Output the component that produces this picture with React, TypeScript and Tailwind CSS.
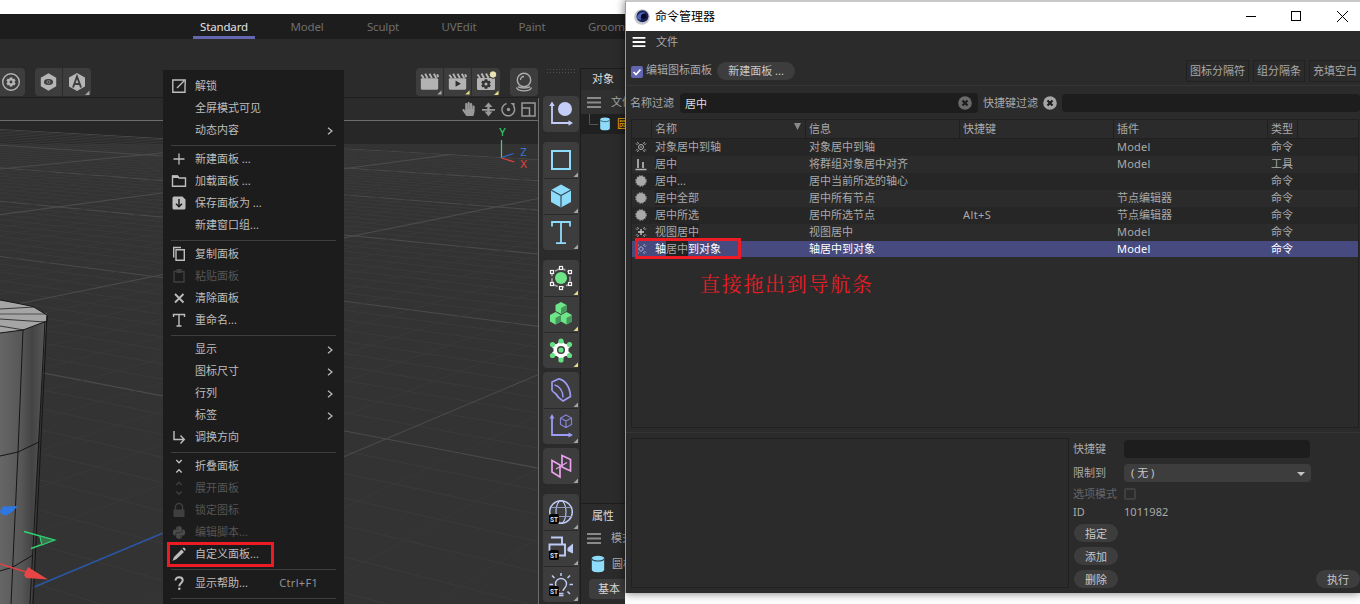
import type { ReactNode } from "react";
import { FaHandPaper, FaPython } from "react-icons/fa";

/* ---------- shared icon helpers ---------- */

function Tool({ children, first = false, corner = "gray" }: { children: ReactNode; first?: boolean; corner?: "gray" | "yellow" | "none" }) {
  return (
    <svg className="block h-9 w-9" viewBox="0 0 36 36" fill="none">
      {!first && <path d="M1 .5H35" stroke="#2a2a2a" />}
      {children}
      {corner !== "none" && <path d="M35 30.500V35H30.500Z" fill={corner === "yellow" ? "#e3dc82" : "#a5a5a5"} />}
    </svg>
  );
}

function StBadge() {
  return (
    <>
      <rect x="6" y="20" width="10" height="10" rx="2" fill="#050505" />
      <text x="11" y="27.700" fill="#dfe3f5" fontSize="6.500" fontWeight="700" textAnchor="middle" fontFamily="Roboto, sans-serif">ST</text>
    </>
  );
}

function Clapper({ children, yellow = false }: { children?: ReactNode; yellow?: boolean }) {
  return (
    <svg className="block h-7 w-7" viewBox="0 0 28 28" fill="none">
      <rect x="5" y="10" width="18" height="12" rx="1.200" fill="#b3b3b3" />
      <path d="M5.500 6.500L8 10M9.500 5.500L12 10M14 5.500L16.500 10M18.500 5.500L21 10M22 6L23 9" stroke="#b3b3b3" strokeWidth="2" />
      {children}
      <path d="M26.500 22.500V27H22Z" fill={yellow ? "#e3dc82" : "#a5a5a5"} />
    </svg>
  );
}

function Gear({ cx, cy, r, color, hole, body = 0.72 }: { cx: number; cy: number; r: number; color: string; hole: string; body?: number }) {
  return (
    <g transform={`translate(${cx} ${cy})`}>
      {[0, 60, 120].map((a) => (
        <path key={a} d={`M0 ${-r}V${r}`} stroke={color} strokeWidth={r * 0.55} transform={`rotate(${a})`} />
      ))}
      <circle r={r * body} fill={color} />
      <circle r={r * 0.32} fill={hole} />
    </g>
  );
}

function Cylinder({ className }: { className: string }) {
  return (
    <svg className={className} viewBox="0 0 12 16">
      <path d="M.5 3V13C.5 16 11.500 16 11.500 13V3Z" fill="#8edcfb" />
      <ellipse cx="6" cy="3" rx="5.500" ry="2.400" fill="#8edcfb" />
      <path d="M.5 3.300C1.500 6 10.500 6 11.500 3.300" fill="none" stroke="#2b4c5a" strokeWidth=".9" />
    </svg>
  );
}

/* ---------- perspective viewport ---------- */

const ax = -1735;
const ay = 31;
const bx = 1340;
const by = 36;

function crossAt(v: [number, number], y: number, x: number) {
  return v[1] + ((y - v[1]) * (x - v[0])) / (345 - v[0]);
}

const gridA = Array.from({ length: 60 }, (_, i) => ({ y: ay + 1 / (0.0085 - i * 0.00012), major: i % 10 === 0 })).filter((g) => g.y > 0 && g.y < 720);
const gridB = Array.from({ length: 40 }, (_, i) => ({ y: by + 1 / (0.01012 - i * 0.000258), major: i % 10 === 0 })).filter((g) => g.y > 0 && g.y < 1000);

function Viewport() {
  return (
    <svg className="block h-[483px] w-[538px]" viewBox="0 121 538 483">
      <defs>
        <linearGradient id="body" x1="0" x2="47" y1="0" y2="0" gradientUnits="userSpaceOnUse">
          <stop offset="0" stopColor="#666" />
          <stop offset=".45" stopColor="#575757" />
          <stop offset=".68" stopColor="#444" />
          <stop offset=".85" stopColor="#505050" />
          <stop offset="1" stopColor="#5a5a5a" />
        </linearGradient>
        <clipPath id="floor">
          <path d="M0 129L538 159V604H0Z" />
        </clipPath>
      </defs>
      <rect y="121" width="538" height="483" fill="#333" />
      <rect y="121" width="538" height="23" fill="#272727" />
      <g clipPath="url(#floor)" fill="none">
        {gridA.map((g, i) => (
          <path key={i} d={`M0 ${crossAt([ax, ay], g.y, 0)}L538 ${crossAt([ax, ay], g.y, 538)}`} stroke={g.major ? "#4b4b4b" : "#3b3b3b"} strokeWidth={g.major ? 1.1 : 0.9} />
        ))}
        {gridB.map((g, i) => (
          <path key={i} d={`M0 ${crossAt([bx, by], g.y, 0)}L538 ${crossAt([bx, by], g.y, 538)}`} stroke={g.major ? "#4b4b4b" : "#393939"} strokeWidth={g.major ? 1.1 : 0.9} />
        ))}
      </g>
      <path d="M34 587L162 533.500" stroke="#2a55a3" strokeWidth="1.400" />
      <path d="M0 333L23 330L46 321L38 450L32 604H0Z" fill="url(#body)" />
      <path d="M0 300L16 303L33 306.500L47 315V321L23 330L0 333Z" fill="#a5a5a5" />
      <path d="M0 309L34 307M0 319L45 322M0 326L24 330" stroke="#2b2b2b" strokeWidth=".9" fill="none" />
      <path d="M0 314H47" stroke="#6d6d6d" strokeWidth="1.600" />
      <path d="M0 300L16 303L33 306.500L47 315V321L23 330L0 333M23 330L18 452L11 604M45 321L38 455L30 604M47 316L41 440L33 604M0 456L18 452L39 442M0 571L13 567L33 555" stroke="#161616" strokeWidth="1" fill="none" />
      <path d="M0 511L3 506.500L18 506L12 512L6 515.500L1 514Z" fill="#2f78e4" />
      <path d="M24 531.500L54.500 540L31 548.500M40 536L42 545" stroke="#2fd46f" strokeWidth="1.400" fill="none" />
      <path d="M40 536L54 540L42 545Z" fill="#38754f" stroke="#2fd46f" strokeWidth=".8" />
      <path d="M0 564L26 572" stroke="#e24040" strokeWidth="1.400" />
      <path d="M24 575L28 567L48 579.500L26 578Z" fill="#e64545" />
      <path d="M501.500 140V158" stroke="#35d676" strokeWidth="1.200" />
      <path d="M501.500 157.500L513.500 153.500" stroke="#3569c8" strokeWidth="1.200" />
      <path d="M501.500 158L514.500 162" stroke="#e24040" strokeWidth="1.200" />
      <g fontFamily="Noto Sans, sans-serif" fontSize="11.500" textAnchor="middle">
        <text x="502.500" y="136" fill="#2fd46f">Y</text>
        <text x="523.500" y="155.500" fill="#3274dc">Z</text>
        <text x="523.500" y="168" fill="#e24444">X</text>
      </g>
    </svg>
  );
}

/* ---------- vertical tool palette ---------- */

function ToolGroup({ children }: { children: ReactNode }) {
  return <div className="w-9 overflow-hidden rounded-[4px] bg-[#3d3d3d]">{children}</div>;
}

function Palette() {
  return (
    <div className="flex w-[41px] shrink-0 flex-col items-start pl-1">
      <svg className="ml-[3px] mt-[29px] block h-7 w-[30px] shrink-0" viewBox="0 0 30 28">
        <path d="M1 1.500H30M1 4.500H30" stroke="#4f4f4f" strokeDasharray="1 2" />
      </svg>
      <ToolGroup>
        <Tool first corner="none">
          <path d="M9 9V27H27" stroke="#c3cdf7" strokeWidth="1.800" />
          <path d="M9 5.500L11.800 10H6.200ZM30 27L25.500 29.800V24.200Z" fill="#c3cdf7" />
          <circle cx="22" cy="13" r="7" fill="#c3cdf7" />
        </Tool>
      </ToolGroup>
      <div className="mt-2.5">
        <ToolGroup>
          <Tool first><rect x="9" y="9" width="18" height="18" stroke="#8edcfb" strokeWidth="2" /></Tool>
          <Tool>
            <path d="M18 6.500L28 12V24L18 29.500L8 24V12Z" fill="#8edcfb" />
            <path d="M8 12L18 17.500L28 12M18 17.500V29.500" stroke="#32505c" strokeWidth="1.200" />
          </Tool>
          <Tool><path d="M9 12.500V8H27V12.500M18 8V29M13 29.200H23" stroke="#8edcfb" strokeWidth="1.800" /></Tool>
        </ToolGroup>
      </div>
      <div className="mt-2.5">
        <ToolGroup>
          <Tool first corner="yellow">
            <path d="M18 8L27 12.500V24L18 28L9 24V12.500Z" stroke="#a8a8a8" strokeWidth="1.500" strokeDasharray="5 2" />
            <circle cx="18" cy="18" r="6.700" fill="#3d3d3d" />
            <circle cx="18" cy="18" r="6" fill="#6ee587" />
            {[[18, 8], [27, 12], [27, 24], [18, 28], [9, 24], [9, 12]].map(([x, y]) => (
              <rect key={`${x}-${y}`} x={x - 1.5} y={y - 1.5} width="3" height="3" fill="#3d3d3d" stroke="#f4f4f4" strokeWidth="1.200" />
            ))}
          </Tool>
          <Tool corner="yellow">
            <path d="M18 6L23.500 9V15L18 18L12.500 15V9Z" fill="#6ee587" />
            <path d="M12.500 16L18 19V25.500L12.500 28.500L7 25.500V19Z" fill="#6ee587" />
            <path d="M23.500 16L29 19V25.500L23.500 28.500L18 25.500V19Z" fill="#6ee587" />
            <path d="M18 12L23.500 9V15L18 18ZM12.500 22L18 19V25.500L12.500 28.500ZM23.500 22L29 19V25.500L23.500 28.500Z" fill="#43975a" />
          </Tool>
          <Tool corner="yellow">
            <Gear cx={18} cy={18} r={8.8} color="#fff" hole="#3d3d3d" body={0.86} />
            <circle cx="18" cy="18" r="4" fill="#3d3d3d" />
            {[[18, 18], [18, 9], [26.5, 12.5], [26.5, 23.5], [18, 28], [9.5, 23.5], [9.5, 12.5]].map(([x, y]) => (
              <circle key={`${x}-${y}`} cx={x} cy={y} r="2.600" fill="#66e085" />
            ))}
          </Tool>
        </ToolGroup>
      </div>
      <div className="mt-1">
        <ToolGroup>
          <Tool first>
            <path d="M9 10L16 6.800C22 8 27 15 27.500 24.500L20 29C15 26 14 24 13 22C10 20 8.500 18 9 17Z" stroke="#9c9bf5" strokeWidth="1.700" strokeLinejoin="round" />
            <path d="M11.500 13C16.500 14 20 19 20 25.500" stroke="#9c9bf5" strokeWidth="1.400" />
          </Tool>
          <Tool>
            <path d="M9 9V27H27" stroke="#9c9bf5" strokeWidth="1.800" />
            <path d="M9 6L11.500 10.500H6.500ZM30 27L25.500 29.500V24.500Z" fill="#9c9bf5" />
            <path d="M23 7L28.500 10V16.500L23 19.500L17.500 16.500V10ZM17.500 10L23 13L28.500 10M23 13V19.500" stroke="#8482d0" strokeWidth="1.200" />
          </Tool>
        </ToolGroup>
      </div>
      <div className="mt-1">
        <ToolGroup>
          <Tool first>
            <path d="M9 12.500L17 17V29L9 24ZM19 7.500L27.500 11.500V23L19 19Z" stroke="#e9a1ea" strokeWidth="1.700" />
            <path d="M13 21L24 14.500" stroke="#e9a1ea" strokeWidth="1.200" />
          </Tool>
        </ToolGroup>
      </div>
      <div className="mt-2.5">
        <ToolGroup>
          <Tool first>
            <circle cx="18" cy="18" r="11.300" stroke="#bfcbf5" strokeWidth="1.500" />
            <ellipse cx="18" cy="18" rx="5" ry="11.300" stroke="#bfcbf5" strokeWidth="1.100" />
            <path d="M8 13.500H28M7 22.500H29" stroke="#8f9ac4" />
            <StBadge />
          </Tool>
          <Tool>
            <path d="M8 7.500H19V13.500M6.500 21V14.500H22V25.500H16" stroke="#bfcbf5" strokeWidth="1.900" />
            <path d="M24.500 18L30 13.500V23.500L24.500 21Z" fill="#bfcbf5" />
            <StBadge />
          </Tool>
          <Tool>
            <path d="M16 25C15.500 22 12.500 21.500 12.500 18A5.500 5.500 0 0 1 23.500 18C23.500 21.500 20.500 22 20 25M16 27.500H20.500M16 29.500H20.500" stroke="#bfcbf5" strokeWidth="1.400" />
            <path d="M18 7V10M9 9.500L11.500 12M27 9.500L24.500 12M6.500 18.500H10M26.500 18.500H30M27 28L24.500 25.500" stroke="#bfcbf5" strokeWidth="1.500" />
            <StBadge />
          </Tool>
        </ToolGroup>
      </div>
    </div>
  );
}

/* ---------- objects and attributes panels ---------- */

function Burger({ className }: { className: string }) {
  return (
    <svg className={className} viewBox="0 0 14 11">
      <path d="M0 1H14M0 5.500H14M0 10H14" stroke="currentColor" strokeWidth="2" />
    </svg>
  );
}

function SidePanels() {
  return (
    <div className="mt-[29px] flex w-[45px] shrink-0 flex-col overflow-hidden whitespace-nowrap border-l border-t border-[#1d1d1d] text-[11px] leading-[22px]">
      <div className="flex h-[434px] shrink-0 flex-col">
        <div className="h-[21px] pl-[11px] leading-[20px] text-[#dcdcdc]">对象</div>
        <div className="flex h-6 items-center gap-2.5 bg-[#303030] pl-1.5 text-[#a9a9a9]">
          <Burger className="h-[11px] w-3.5 shrink-0 text-[#8a8a8a]" />
          <span>文件</span>
        </div>
        <div className="flex h-5 items-center bg-[#202020]">
          <svg className="h-5 w-[18px] shrink-0" viewBox="0 0 18 20"><path d="M8.500 0V10.500H17" fill="none" stroke="#555" /></svg>
          <Cylinder className="h-[14px] w-3 shrink-0" />
          <span className="ml-1.5 text-[#ffb000]">圆柱体</span>
        </div>
      </div>
      <div className="flex flex-1 flex-col border-t border-[#1d1d1d] pt-px">
        <div className="pl-[11px] text-[#dcdcdc]">属性</div>
        <div className="flex h-[22px] items-center gap-2.5 pl-1.5 text-[#a9a9a9]">
          <Burger className="h-[11px] w-3.5 shrink-0 text-[#8a8a8a]" />
          <span>模式</span>
        </div>
        <div className="flex h-[30px] items-center gap-[7px] pl-2.5 text-[#b0b0b0]">
          <Cylinder className="h-[18px] w-[14px] shrink-0" />
          <span>圆柱</span>
        </div>
        <div className="flex pl-2">
          <div className="h-5 w-12 shrink-0 rounded-[4px] bg-[#3d3d3d] pl-[9px] leading-[19px] text-[#d6d6d6]">基本</div>
        </div>
      </div>
    </div>
  );
}

/* ---------- main application ---------- */

function TabBar() {
  return (
    <div className="flex h-[25px] bg-[#1d1d1d] text-[11.5px] leading-[26px] tracking-[-0.15px] text-[#6e6e6e]">
      <div className="ml-[193px] w-[62px] border-b-[3px] border-[#6467b0] text-center text-[#e2e2e2]">Standard</div>
      <div className="ml-5 w-16 text-center">Model</div>
      <div className="ml-3 w-16 text-center">Sculpt</div>
      <div className="ml-3 w-16 text-center">UVEdit</div>
      <div className="ml-[9px] w-16 text-center">Paint</div>
      <div className="ml-6">Groom</div>
    </div>
  );
}

function IconBar() {
  return (
    <div className="flex h-[59px] items-start border-b border-[#202020] pt-[29px]">
      <div className="h-7 w-[25px] rounded-r-[4px] bg-[#3d3d3d]">
        <svg className="block h-7 w-[25px]" viewBox="0 0 25 28" fill="none">
          <circle cx="11" cy="14" r="8.300" stroke="#b5b5b5" strokeWidth="1.400" />
          <Gear cx={11} cy={14} r={4.6} color="#b5b5b5" hole="#3d3d3d" body={0.8} />
        </svg>
      </div>
      <div className="ml-2.5 flex h-7 w-14 divide-x divide-[#2c2c2c] rounded-[4px] bg-[#3d3d3d]">
        <svg className="block h-7 w-7" viewBox="0 0 28 28" fill="none">
          <path d="M14 5L22 9.500V18.500L14 23L6 18.500V9.500Z" fill="#b5b5b5" />
          <ellipse cx="14" cy="14" rx="4.700" ry="3.100" fill="#3d3d3d" />
          <circle cx="14" cy="14" r="1.500" stroke="#999" strokeWidth=".8" />
        </svg>
        <svg className="block h-7 w-7" viewBox="0 0 28 28" fill="none">
          <path d="M14 5L22 9.500V18.500L14 23L6 18.500V9.500Z" fill="#b5b5b5" />
          <path d="M10 19.500L14 8.500L18 19.500M11.500 16H16.500" stroke="#3d3d3d" strokeWidth="1.900" />
          <path d="M26.500 22.500V27H22Z" fill="#a5a5a5" />
        </svg>
      </div>
      <div className="ml-[325px] flex h-7 w-[84px] divide-x divide-[#2c2c2c] rounded-[4px] bg-[#3d3d3d]">
        <Clapper />
        <Clapper yellow><path d="M12 12.500V19L17.500 15.700Z" fill="#2e2e2e" /></Clapper>
        <Clapper yellow>
          <Gear cx={14} cy={16} r={4.8} color="#333" hole="#b3b3b3" body={0.78} />
          <circle cx="21" cy="6.500" r="3.800" fill="#e8e3b4" stroke="#333" />
        </Clapper>
      </div>
      <svg className="ml-2.5 block h-7 w-7 rounded-[4px] bg-[#3d3d3d]" viewBox="0 0 28 28" fill="none">
        <circle cx="14" cy="12" r="6.700" stroke="#adadad" strokeWidth="1.400" />
        <path d="M10.500 12A3.500 3.500 0 0 1 14 8.500M8 18.500C10 20.500 18 20.500 20 18.500M6.500 19.500C8 24 20 24 21.500 19.500" stroke="#adadad" strokeWidth="1.300" />
      </svg>
    </div>
  );
}

function ViewBar() {
  return (
    <div className="flex h-[23px] items-center justify-end gap-[5px] border-b border-[#6c6c6c] bg-[#2b2b2b] pr-[2px] text-[#999]">
      <FaHandPaper className="h-[14px] w-[15px]" />
      <svg className="h-[15px] w-[15px]" viewBox="0 0 15 15"><path d="M7.500 0.500L11.500 5H8.700V7H14V8.800H8.700V9.500H11.500L7.500 14.500L3.500 9.500H6.300V8.800H1V7H6.300V5H3.500Z" fill="#999" /></svg>
      <svg className="h-[15px] w-[15px]" viewBox="0 0 15 15" fill="none"><path d="M5.500 1.500A6.300 6.300 0 1 0 12.500 4" stroke="#999" strokeWidth="1.500" /><circle cx="7.500" cy="7.500" r="1.700" fill="#999" /><path d="M9.500 1H13.500V5Z" fill="#999" /></svg>
      <svg className="h-[15px] w-[15px]" viewBox="0 0 15 15" fill="none"><path d="M1 1H14V14H1ZM1 6H8.500V14" stroke="#999" strokeWidth="1.500" /></svg>
    </div>
  );
}

/* ---------- context menu ---------- */

type Item = { label: string; icon?: ReactNode; arrow?: boolean; off?: boolean; keys?: string };

const stroke = { fill: "none", stroke: "currentColor", strokeWidth: 1.4 };

const sections: Item[][] = [
  [
    { label: "解锁", icon: <path d="M9 2H1.800V14.200H14V7M6 10L13 3M9 2H14.200V7" {...stroke} /> },
    { label: "全屏模式可见" },
    { label: "动态内容", arrow: true },
  ],
  [
    { label: "新建面板 ...", icon: <path d="M8 2.500V13.500M2.500 8H13.500" {...stroke} strokeWidth={1.300} /> },
    { label: "加载面板 ...", icon: <><path d="M1.500 4V13.200H14.500V5H8L6.500 3H1.500V5" {...stroke} /><path d="M1 2.500H7L8 5H1Z" fill="currentColor" /></> },
    { label: "保存面板为 ...", icon: <><path d="M3 1.500H11.500L14.500 4.500V13A1.500 1.500 0 0 1 13 14.500H3A1.500 1.500 0 0 1 1.500 13V3A1.500 1.500 0 0 1 3 1.500" fill="currentColor" /><path d="M8 4V11.500M5 8.700L8 11.700L11 8.700" fill="none" stroke="#1c1c1c" strokeWidth="1.500" /></> },
    { label: "新建窗口组..." },
  ],
  [
    { label: "复制面板", icon: <path d="M5 3.700H13.300V14.300H5ZM2.700 11.500V1.500H10" {...stroke} /> },
    { label: "粘贴面板", off: true, icon: <><path d="M3 3.500H13V14H3Z" {...stroke} /><path d="M5.500 1H10.500V5H5.500Z" fill="currentColor" /></> },
    { label: "清除面板", icon: <path d="M4 4L12.500 12.500M12.500 4L4 12.500" {...stroke} strokeWidth={1.800} /> },
    { label: "重命名...", icon: <path d="M2.500 5V2.500H13.500V5M8 2.500V14M5.500 14H10.500" {...stroke} /> },
  ],
  [
    { label: "显示", arrow: true },
    { label: "图标尺寸", arrow: true },
    { label: "行列", arrow: true },
    { label: "标签", arrow: true },
    { label: "调换方向", icon: <path d="M3 2V10.500H13M9.500 6.500L13.300 10.500L9.500 14.500" {...stroke} /> },
  ],
  [
    { label: "折叠面板", icon: <path d="M5.300 2L8 4.700L10.700 2M5.300 14.500L8 11.800L10.700 14.500" {...stroke} /> },
    { label: "展开面板", off: true, icon: <path d="M5.300 5L8 2.300L10.700 5M5.300 11.500L8 14.200L10.700 11.500" {...stroke} /> },
    { label: "锁定图标", off: true, icon: <><path d="M2.500 7.500H13.500V15H2.500Z" fill="currentColor" /><path d="M4.500 8V5A3.500 3.500 0 0 1 11.500 5V8" {...stroke} /></> },
    { label: "编辑脚本...", off: true, icon: <FaPython x="1" y="1.500" size={14} className="text-[#4a4a4a]" /> },
    { label: "自定义面板...", icon: <path d="M1.500 14.700L3 11L10.500 3.500L13 6L5.300 13.300ZM11.500 2.500L12.500 1.500Q14 1.500 14.700 3.500L13.900 5Z" fill="currentColor" /> },
  ],
  [{ label: "显示帮助...", keys: "Ctrl+F1", icon: <><path d="M4.500 5.500C4.500 1 11.700 1.500 11.700 5.300C11.700 8 8.300 8 8.300 11.200" {...stroke} strokeWidth={2} /><circle cx="8.300" cy="13.800" r="1.300" fill="currentColor" /></> }],
];

function MenuRow({ item }: { item: Item }) {
  return (
    <div className={`flex h-[22px] items-center ${item.off ? "text-[#555]" : "text-[#bdbdbd]"}`}>
      <svg className={`ml-2 mr-2 h-4 w-4 shrink-0 ${item.off ? "text-[#3f3f3f]" : ""}`} viewBox="0 0 16 16">{item.icon}</svg>
      <span className="flex-1 leading-[22px]">{item.label}</span>
      {item.keys && <span className="mr-[26px] tracking-[0.3px] text-[#929292]">{item.keys}</span>}
      {item.arrow && <svg className="mr-2.5 mt-0.5 h-2 w-2" viewBox="0 0 8 8"><path d="M2 .7L6 4L2 7.300" fill="none" stroke="currentColor" strokeWidth="1.200" /></svg>}
    </div>
  );
}

function ContextMenu() {
  return (
    <div className="absolute left-[163px] top-[70px] h-[534px] w-[181px] overflow-hidden whitespace-nowrap bg-[#1c1c1c] pt-[5px] text-[11px]">
      {sections.map((rows, i) => (
        <div key={i}>
          {rows.map((item) => <MenuRow key={item.label} item={item} />)}
          <div className="mx-2 flex h-[7px] items-center"><div className="mt-px h-px w-full bg-[#3e3e3e]" /></div>
        </div>
      ))}
      <div className="absolute left-1 top-[472px] h-[25px] w-[107px] border-[3px] border-[#ed1c24]" />
    </div>
  );
}

/* ---------- command manager window ---------- */

const dot = <><circle cx="8" cy="8" r="5" fill="#a9a9a9" /><circle cx="8" cy="8" r="5.300" fill="none" stroke="#a9a9a9" strokeDasharray="1.500 1.270" /></>;
const corners = <path d="M3 4.500L4.500 6M4.500 3L5.500 5M13 4.500L11.500 6M11.500 3L10.500 5M3 11.500L4.500 10M4.500 13L5.500 11M13 11.500L11.500 10M11.500 13L10.500 11" stroke="#aaa" />;

const commands = [
  { icon: <>{corners}<circle cx="8" cy="8" r="2.500" fill="none" stroke="#b5b5b5" /><circle cx="8" cy="8" r=".8" fill="#b5b5b5" /></>, name: ["对象", "居中", "到轴"], info: "对象居中到轴", keys: "", plugin: "Model", type: "命令" },
  { icon: <path d="M5 3V12M10 6V12M2.500 13.500H13.500" stroke="#b5b5b5" strokeWidth="1.700" />, name: ["", "居中", ""], info: "将群组对象居中对齐", keys: "", plugin: "Model", type: "工具" },
  { icon: dot, name: ["", "居中", "..."], info: "居中当前所选的轴心", keys: "", plugin: "", type: "命令" },
  { icon: dot, name: ["", "居中", "全部"], info: "居中所有节点", keys: "", plugin: "节点编辑器", type: "命令" },
  { icon: dot, name: ["", "居中", "所选"], info: "居中所选节点", keys: "Alt+S", plugin: "节点编辑器", type: "命令" },
  { icon: <>{corners}<path d="M8 5V11M5 8H11" stroke="#ccc" strokeWidth="1.300" /></>, name: ["视图", "居中", ""], info: "视图居中", keys: "", plugin: "Model", type: "命令" },
  { icon: <>{corners}<path d="M8 5.500L10.500 8L8 10.500L5.500 8Z" fill="none" stroke="#b9bbe0" /></>, name: ["轴", "居中", "到对象"], info: "轴居中到对象", keys: "", plugin: "Model", type: "命令" },
];

const cols = "grid grid-cols-[20px_154px_154px_154px_154px_30px_1fr]";

function CommandTable() {
  return (
    <div className="ml-[5px] mr-px mt-[6px] h-[309px] border border-[#202020] text-[11px] text-[#a9a9a9]">
      <div className={`${cols} h-[19px] divide-x divide-[#202020] border-b border-[#202020] leading-[18px]`}>
        <span />
        <span className="flex items-start justify-between pl-[3px]">名称<svg className="mr-1 mt-[3px] h-[7px] w-[7px]" viewBox="0 0 7 7"><path d="M0 0H7L3.500 7Z" fill="#8a8a8a" /></svg></span>
        <span className="pl-[3px]">信息</span>
        <span className="pl-[3px]">快捷键</span>
        <span className="pl-[3px]">插件</span>
        <span className="pl-[3px]">类型</span>
        <span />
      </div>
      {commands.map((c, i) => {
        const sel = i === 6;
        return (
          <div key={i} className={`${cols} h-[17px] leading-[15px] ${sel ? "border-b border-[#2b2b2b] bg-[#474a7f] text-white" : i % 2 ? "bg-[#2b2b2b]" : "bg-[#262626]"}`}>
            <svg className="ml-px h-4 w-4" viewBox="0 0 16 16">{c.icon}</svg>
            <span className="pl-[3px]">
              {c.name.map((part, k) => <span key={k} className={k === 1 ? `bg-[#222] ${sel ? "text-[#a9a9a9]" : ""}` : ""}>{part}</span>)}
            </span>
            <span className="pl-[3px]">{c.info}</span>
            <span className="pl-[3px] tracking-[0.4px]">{c.keys}</span>
            <span className={/[A-Z]/.test(c.plugin) ? "pl-[3px] tracking-[0.2px]" : "pl-[3px]"}>{c.plugin}</span>
            <span className="pl-[3px]">{c.type}</span>
          </div>
        );
      })}
    </div>
  );
}

function ClearIcon({ className }: { className: string }) {
  return (
    <svg className={className} viewBox="0 0 14 14">
      <circle cx="7" cy="7" r="6.800" fill="currentColor" />
      <path d="M4.500 4.500L9.500 9.500M9.500 4.500L4.500 9.500" stroke="#1d1d1d" strokeWidth="2.200" />
    </svg>
  );
}

function Pill({ children }: { children: string }) {
  return <button className="block h-[18px] w-11 rounded-full bg-[#3d3d3d] text-center leading-[17px] text-[#c8c8c8]">{children}</button>;
}

function Separator({ children }: { children: string }) {
  return <div className="h-[22px] shrink-0 border border-[#212121] px-[3px] leading-[19px]">{children}</div>;
}

function CommandManager() {
  return (
    <div className="absolute left-[625px] top-0 h-[593px] w-[735px] overflow-visible border-l border-t-2 border-l-[#9b9b9b] border-t-[#c8c8c8] bg-[#2b2b2b] text-[11px] text-[#a9a9a9] shadow-[0_0_9px_rgba(0,0,0,0.55)]">
      <div className="flex h-[29px] items-center bg-white text-black">
        <svg className="ml-2 h-4 w-4" viewBox="0 0 16 16">
          <circle cx="8" cy="8" r="7.800" fill="#c3c6cd" />
          <circle cx="8.500" cy="7.300" r="6" fill="#1b2153" />
          <path d="M3 8C4 4 9 2 12 4C8 4 6 7 7 11C5 11 3 10 3 8Z" fill="#4c66bd" />
          <circle cx="9.700" cy="7.300" r="2.600" fill="#090b20" />
        </svg>
        <span className="ml-[5px] text-[12px] leading-[28px]">命令管理器</span>
        <svg className="ml-auto mr-2.5 h-3 w-[108px] -translate-y-[1px]" viewBox="0 0 108 12" fill="none" stroke="#000">
          <path d="M4 6.500H14M95 1L106 12M106 1L95 12" />
          <rect x="49.500" y="1.500" width="9" height="9" />
        </svg>
      </div>
      <div className="flex h-[22px] items-center gap-2.5 pl-1.5">
        <Burger className="h-[10px] w-3.5 text-white" />
        <span>文件</span>
      </div>
      <div className="flex h-[33px] items-center border-b border-[#353535] pl-[5px] pt-[3px]">
        <svg className="mt-0.5 h-3 w-3 shrink-0" viewBox="0 0 12 12"><rect width="12" height="12" rx="2" fill="#6265b0" /><path d="M2.500 6L5 8.500L9.500 3.500" fill="none" stroke="#fff" strokeWidth="1.700" /></svg>
        <span className="ml-[3px]">编辑图标面板</span>
        <button className="ml-[5px] h-[18px] w-[78px] rounded-full bg-[#3d3d3d] leading-[17px] text-[#c8c8c8]">新建面板 ...</button>
        <div className="-mr-px ml-auto flex gap-1">
          <Separator>图标分隔符</Separator>
          <Separator>组分隔条</Separator>
          <Separator>充填空白</Separator>
        </div>
      </div>
      <div className="mt-[7px] flex h-5 items-center pl-1">
        <span>名称过滤</span>
        <div className="ml-1.5 flex h-5 w-[298px] items-center justify-between rounded-[4px] bg-[#1d1d1d] pl-[5px] pr-1.5 leading-[19px] text-[#dedede]">
          居中<ClearIcon className="h-[14px] w-[14px] text-[#6a6a6a]" />
        </div>
        <span className="ml-[5px]">快捷键过滤</span>
        <ClearIcon className="ml-[5px] h-[14px] w-[14px] text-[#a5a5a5]" />
        <div className="ml-[5px] h-[18px] flex-1 rounded-[4px] bg-[#1d1d1d]" />
      </div>
      <CommandTable />
      <div className="mt-1 h-px bg-[#353535]" />
      <div className="flex">
        <div className="ml-[5px] mt-[5px] h-[150px] w-[438px] border border-[#202020]" />
        <div className="ml-1 mt-[7px] flex flex-1 flex-col">
          <div className="flex h-[18px] items-center leading-[18px]"><span className="w-[51px]">快捷键</span><div className="h-[18px] w-[186px] rounded-[4px] bg-[#1d1d1d]" /></div>
          <div className="mt-1.5 flex h-[18px] items-center leading-[18px]">
            <span className="w-[51px]">限制到</span>
            <div className="flex h-[18px] w-[187px] items-center justify-between rounded-[4px] bg-[#3d3d3d] pl-[7px] pr-1.5 text-[#c8c8c8]">
              <span>( 无 )</span>
              <svg className="mt-0.5 h-1 w-2" viewBox="0 0 8 4"><path d="M0 0H8L4 4Z" fill="#c4c4c4" /></svg>
            </div>
          </div>
          <div className="mt-[3px] flex h-[18px] items-center text-[#666]"><span className="w-[51px]">选项模式</span><div className="h-3 w-3 rounded-[2px] border-2 border-[#404040]" /></div>
          <div className="flex h-[18px] items-center"><span className="w-[51px]">ID</span><span className="tracking-[0.05px]">1011982</span></div>
          <div className="mt-[3px] flex items-end justify-between">
            <div className="ml-px flex flex-col gap-[5px]">
              <Pill>指定</Pill>
              <Pill>添加</Pill>
              <Pill>删除</Pill>
            </div>
            <Pill>执行</Pill>
          </div>
        </div>
      </div>
    </div>
  );
}

export default function App() {
  return (
    <div className="relative h-[604px] w-[1360px] overflow-hidden bg-white pt-3.5 font-['Noto_Sans','Noto_Sans_CJK_SC',sans-serif]">
      <div className="h-[590px] w-[625px] overflow-hidden bg-[#2b2b2b]">
        <TabBar />
        <div className="flex h-[565px]">
          <div className="w-[539px] shrink-0">
            <IconBar />
            <div className="border-r border-[#6c6c6c]">
              <ViewBar />
              <Viewport />
            </div>
          </div>
          <Palette />
          <SidePanels />
        </div>
      </div>
      <ContextMenu />
      <CommandManager />
      <div className="absolute left-[635px] top-[238px] h-[21px] w-[106px] border-[3px] border-[#ed1c24]" />
      <div className="absolute left-[700px] top-[269px] font-['Noto_Serif_CJK_SC','Noto_Sans_CJK_SC',serif] text-[20px] leading-[30px] tracking-[1.700px] text-[#ed1c24]">直接拖出到导航条</div>
    </div>
  );
}
